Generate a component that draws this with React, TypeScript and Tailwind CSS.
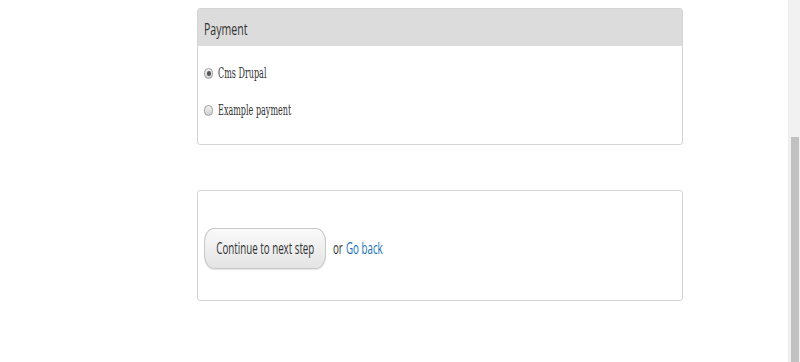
import React from 'react';

const sans = "font-['Open_Sans',sans-serif]";
const serif = "font-['DejaVu_Serif',serif]";

interface PaymentOption {
  id: string;
  label: string;
  width: string;
  checked?: boolean;
}

const options: PaymentOption[] = [
  { id: 'cms', label: 'Cms Drupal', width: 'w-[50px]', checked: true },
  { id: 'example', label: 'Example payment', width: 'w-[75px]' },
];

// the shot is squeezed sideways, so text gets a narrow box and a horizontal scale
function Narrow({
  children,
  className = '',
  scale = 'scale-x-[0.61]',
}: {
  children: React.ReactNode;
  className?: string;
  scale?: string;
}) {
  return (
    <span className={`inline-block shrink-0 ${className}`}>
      <span className={`inline-block origin-left whitespace-nowrap ${scale}`}>{children}</span>
    </span>
  );
}

function Radio({ checked }: { checked?: boolean }) {
  return (
    <span className="flex h-[11px] w-[9px] shrink-0 items-center justify-center rounded-full border border-[#9e9e9e] bg-gradient-to-b from-[#f2f2f2] to-[#d0d0d0]">
      {checked ? <span className="h-[5px] w-[4px] rounded-full bg-[#555]" /> : null}
    </span>
  );
}

function PaymentPanel() {
  return (
    <div className="overflow-hidden rounded-[3px] border border-[#d4d4d4] bg-white">
      <div className={`flex h-[37px] items-center bg-[#dcdcdc] px-[6px] pt-[2px] text-[16px] text-[#333] ${sans}`}>
        <Narrow className="w-[42px]" scale="scale-x-[0.66]">
          Payment
        </Narrow>
      </div>
      <div className="flex h-[98px] flex-col gap-[20px] pt-[19px]">
        {options.map((option) => (
          <label key={option.id} className="flex h-[17px] items-center gap-[5px] pl-[6px]">
            <Radio checked={option.checked} />
            <Narrow className={`text-[14px] text-[#333] ${serif} ${option.width}`} scale="scale-x-[0.575]">
              {option.label}
            </Narrow>
          </label>
        ))}
      </div>
    </div>
  );
}

function ActionsPanel() {
  return (
    <div className="flex h-[111px] items-center rounded-[3px] border border-[#d4d4d4] bg-white pl-[6px] pt-[5px]">
      <button
        className={`flex h-[41px] w-[122px] items-center justify-center overflow-visible rounded-[10px/14px] border border-[#c8c8c8] bg-gradient-to-b from-[#fafafa] to-[#e4e4e4] text-[16px] text-[#333] shadow-[0_1px_1px_rgba(0,0,0,0.1)] ${sans}`}
      >
        <span className="inline-block shrink-0 scale-x-[0.61] whitespace-nowrap">Continue to next step</span>
      </button>
      <Narrow className={`ml-[7px] w-[9px] text-[16px] text-[#333] ${sans}`}>or</Narrow>
      <a href="#" className={`ml-[4px] text-[16px] text-[#1670b7] ${sans}`}>
        <Narrow className="w-[36px]">Go back</Narrow>
      </a>
    </div>
  );
}

export default function App() {
  return (
    <div className="flex h-[362px] w-[800px] bg-white">
      <main className="flex-1 pt-[8px]">
        <div className="ml-[197px] flex w-[486px] flex-col gap-[45px]">
          <PaymentPanel />
          <ActionsPanel />
        </div>
      </main>
      <div className="flex w-[12px] flex-col border-l border-[#ececec] bg-[#f1f1f1] pl-[2px] pr-[1px]">
        <div className="mt-[137px] flex-1 bg-[#c1c1c1]" />
      </div>
    </div>
  );
}
